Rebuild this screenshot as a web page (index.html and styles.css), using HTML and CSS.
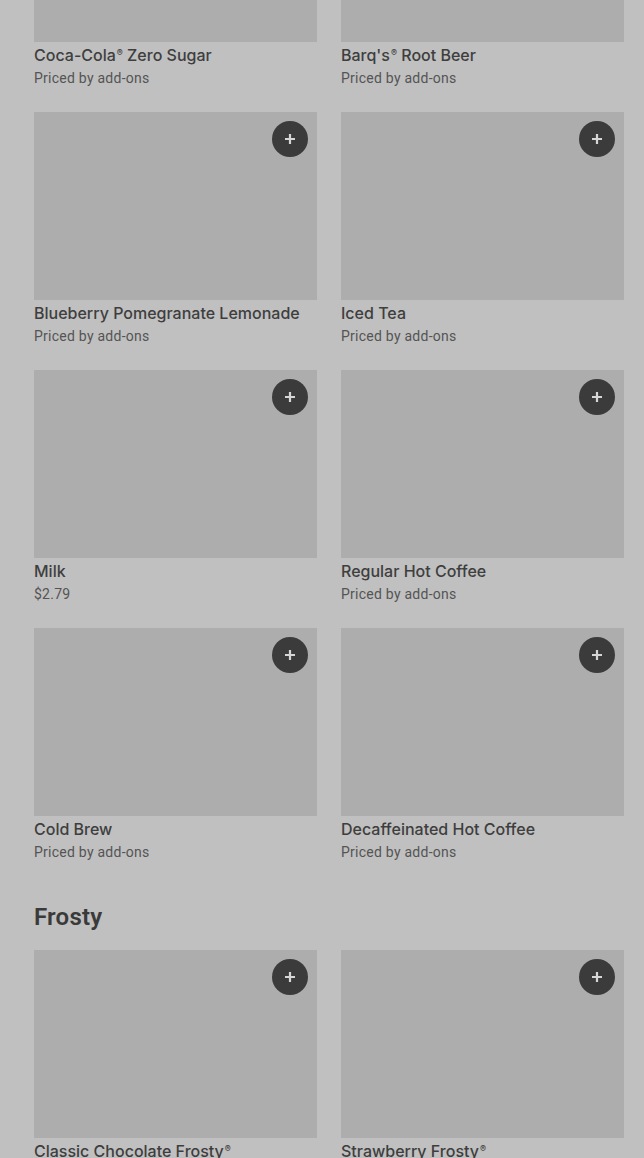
FILE: index.html
```html
<!DOCTYPE html>
<html lang="en">
<head>
    <meta charset="UTF-8">
    <meta name="viewport" content="width=device-width, initial-scale=1.0">
    <title>Menu</title>
    <link rel="stylesheet" href="styles.css">
</head>
<body>
    <div class="menu">
        <section class="section">
            <div class="grid">
                <div class="item">
                    <div class="thumb"><button class="add"><svg viewBox="0 0 12 12"><path d="M6 1v10M1 6h10"/></svg></button></div>
                    <div class="name">Coca-Cola<span class="reg">®</span> Zero Sugar</div>
                    <div class="price">Priced by add-ons</div>
                </div>
                <div class="item">
                    <div class="thumb"><button class="add"><svg viewBox="0 0 12 12"><path d="M6 1v10M1 6h10"/></svg></button></div>
                    <div class="name">Barq's<span class="reg">®</span> Root Beer</div>
                    <div class="price">Priced by add-ons</div>
                </div>
                <div class="item">
                    <div class="thumb"><button class="add"><svg viewBox="0 0 12 12"><path d="M6 1v10M1 6h10"/></svg></button></div>
                    <div class="name">Blueberry Pomegranate Lemonade</div>
                    <div class="price">Priced by add-ons</div>
                </div>
                <div class="item">
                    <div class="thumb"><button class="add"><svg viewBox="0 0 12 12"><path d="M6 1v10M1 6h10"/></svg></button></div>
                    <div class="name">Iced Tea</div>
                    <div class="price">Priced by add-ons</div>
                </div>
                <div class="item">
                    <div class="thumb"><button class="add"><svg viewBox="0 0 12 12"><path d="M6 1v10M1 6h10"/></svg></button></div>
                    <div class="name">Milk</div>
                    <div class="price">$2.79</div>
                </div>
                <div class="item">
                    <div class="thumb"><button class="add"><svg viewBox="0 0 12 12"><path d="M6 1v10M1 6h10"/></svg></button></div>
                    <div class="name">Regular Hot Coffee</div>
                    <div class="price">Priced by add-ons</div>
                </div>
                <div class="item">
                    <div class="thumb"><button class="add"><svg viewBox="0 0 12 12"><path d="M6 1v10M1 6h10"/></svg></button></div>
                    <div class="name">Cold Brew</div>
                    <div class="price">Priced by add-ons</div>
                </div>
                <div class="item">
                    <div class="thumb"><button class="add"><svg viewBox="0 0 12 12"><path d="M6 1v10M1 6h10"/></svg></button></div>
                    <div class="name">Decaffeinated Hot Coffee</div>
                    <div class="price">Priced by add-ons</div>
                </div>
            </div>
        </section>

        <section class="section">
            <h2>Frosty</h2>
            <div class="grid">
                <div class="item">
                    <div class="thumb"><button class="add"><svg viewBox="0 0 12 12"><path d="M6 1v10M1 6h10"/></svg></button></div>
                    <div class="name">Classic Chocolate Frosty<span class="reg">®</span></div>
                    <div class="price">Priced by add-ons</div>
                </div>
                <div class="item">
                    <div class="thumb"><button class="add"><svg viewBox="0 0 12 12"><path d="M6 1v10M1 6h10"/></svg></button></div>
                    <div class="name">Strawberry Frosty<span class="reg">®</span></div>
                    <div class="price">Priced by add-ons</div>
                </div>
            </div>
        </section>
    </div>
</body>
</html>
```

FILE: styles.css
```css
body {
    margin: 0;
    background: #c0c0c0;
    font-family: Roboto, "Liberation Sans", sans-serif;
    color: #3f3f3f;
    overflow: hidden;
}

.menu {
    margin-top: -146px;
    padding: 0 20px 0 34px;
}

.grid {
    display: grid;
    grid-template-columns: 283px 283px;
    column-gap: 24px;
    row-gap: 24px;
}

.thumb {
    position: relative;
    height: 188px;
    background: #adadad;
}

.add {
    position: absolute;
    top: 9px;
    right: 9px;
    width: 36px;
    height: 36px;
    border: none;
    border-radius: 50%;
    background: #3b3b3b;
    padding: 0;
    display: flex;
    align-items: center;
    justify-content: center;
    cursor: pointer;
}

.add svg {
    width: 12px;
    height: 12px;
    stroke: #d6d6d6;
    stroke-width: 2.2;
    fill: none;
}

.name {
    margin-top: 3px;
    font-family: Inter, Roboto, sans-serif;
    font-size: 16px;
    line-height: 20px;
    font-weight: 500;
    color: #3e3e3e;
}

.reg {
    font-size: 9px;
    vertical-align: 5px;
    line-height: 0;
    margin-left: 1px;
}

.price {
    margin-top: 3px;
    font-size: 14px;
    line-height: 20px;
    letter-spacing: 0.25px;
    color: #545454;
}

h2 {
    margin: 39px 0 17px;
    font-size: 24px;
    line-height: 32px;
    font-weight: 600;
    letter-spacing: 0.2px;
    color: #3a3a3a;
}
```
